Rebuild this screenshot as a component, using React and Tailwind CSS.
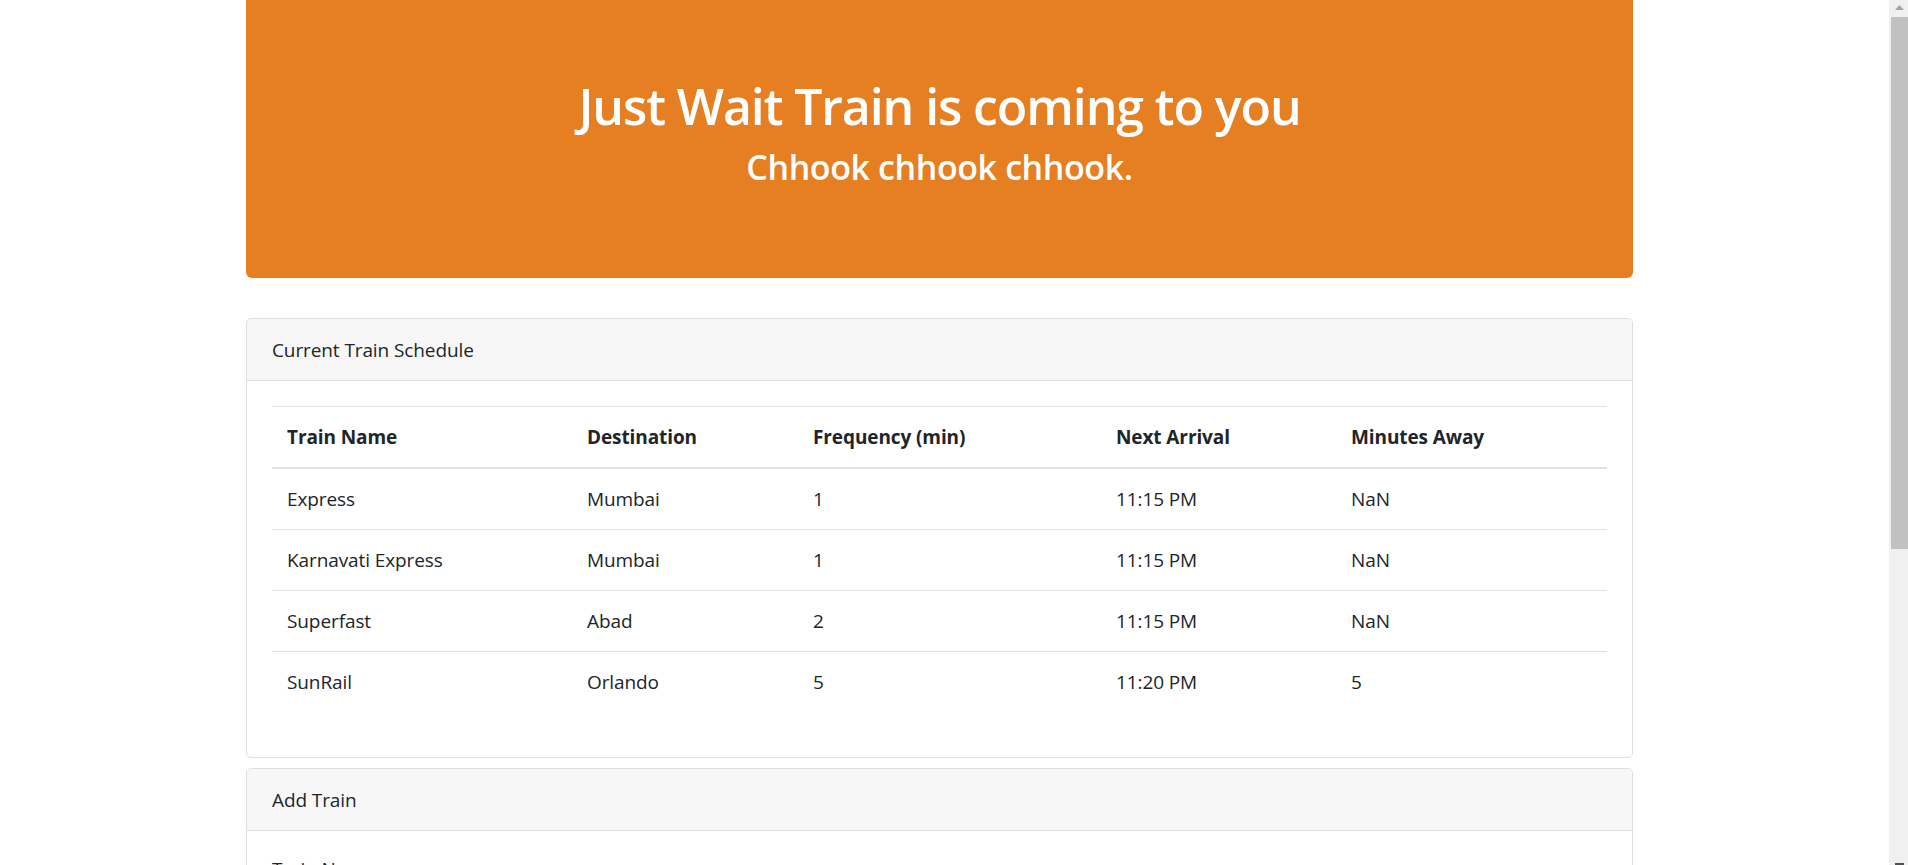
import React from "react";

const rows = [
  ["Express", "Mumbai", "1", "11:15 PM", "NaN"],
  ["Karnavati Express", "Mumbai", "1", "11:15 PM", "NaN"],
  ["Superfast", "Abad", "2", "11:15 PM", "NaN"],
  ["SunRail", "Orlando", "5", "11:20 PM", "5"],
];

const widths = ["w-[300px]", "w-[226px]", "w-[303px]", "w-[235px]", "w-auto"];

function Field({ label }) {
  return (
    <div className="mb-[20px]">
      <label className="mb-[10px] block text-[19px] leading-[30px]">{label}</label>
      <input className="block h-[48px] w-full rounded-[5px] border border-[#ced4da] px-[15px] text-[19px] text-[#495057] outline-none" />
    </div>
  );
}

function Scrollbar() {
  return (
    <div className="fixed right-0 top-0 flex h-screen w-[19px] flex-col items-end bg-[#f0f0f0]">
      <div className="flex h-[17px] w-[17px] items-start justify-center pt-[5px]">
        <svg width="9" height="5" viewBox="0 0 9 5">
          <path d="M4.5 0 L9 5 L0 5 Z" fill="#a3a3a3" />
        </svg>
      </div>
      <div className="h-[532px] w-[17px] bg-[#c1c1c1]" />
      <div className="flex-1" />
      <div className="flex h-[2px] w-[17px] justify-center">
        <div className="h-[2px] w-[9px] bg-[#505050]" />
      </div>
    </div>
  );
}

export default function App() {
  return (
    <div className="min-h-[2277px] bg-white font-['Open_Sans',sans-serif] tracking-[-0.1px] text-[#212529]">
      <div className="ml-[246px] w-[1387px]">
        <header className="flex h-[278px] flex-col items-center rounded-b-[6px] bg-[#e67e22] pt-[76px] text-white">
          <h1 className="text-[50px] font-semibold leading-[60px] tracking-[-1.1px]">Just Wait Train is coming to you</h1>
          <h3 className="mt-[11px] text-[34px] font-semibold leading-[40px] tracking-[-0.4px]">Chhook chhook chhook.</h3>
        </header>

        <section className="mt-[40px] rounded-[5px] border border-[#dfdfdf]">
          <div className="rounded-t-[5px] border-b border-[#dfdfdf] bg-[#f7f7f7] px-[25px] pb-[15px] pt-[16px] text-[19px] leading-[30px]">
            Current Train Schedule
          </div>
          <div className="p-[25px]">
            <table className="mb-[20px] w-full border-collapse text-left text-[19px] leading-[30px]">
              <thead>
                <tr>
                  {["Train Name", "Destination", "Frequency (min)", "Next Arrival", "Minutes Away"].map((h, i) => (
                    <th
                      key={h}
                      className={`${widths[i]} border-t border-b-2 border-t-[#dee2e6] border-b-[#dee2e6] px-[15px] py-[15px] font-bold`}
                    >
                      {h}
                    </th>
                  ))}
                </tr>
              </thead>
              <tbody>
                {rows.map((r) => (
                  <tr key={r[0]}>
                    {r.map((c, i) => (
                      <td key={i} className="border-t border-[#dee2e6] px-[15px] py-[15px]">
                        {c}
                      </td>
                    ))}
                  </tr>
                ))}
              </tbody>
            </table>
          </div>
        </section>

        <section className="mt-[10px] rounded-[5px] border border-[#dfdfdf]">
          <div className="rounded-t-[5px] border-b border-[#dfdfdf] bg-[#f7f7f7] px-[25px] pb-[15px] pt-[16px] text-[19px] leading-[30px]">
            Add Train
          </div>
          <form className="px-[25px] pb-[25px] pt-[23px]">
            <Field label="Train Name" />
            <Field label="Destination" />
            <Field label="First Train Time (HH:mm - military time)" />
            <Field label="Frequency (min)" />
            <button
              type="button"
              className="rounded-[5px] bg-[#007bff] px-[15px] py-[8px] text-[19px] leading-[30px] text-white"
            >
              Submit
            </button>
          </form>
        </section>
      </div>
      <Scrollbar />
    </div>
  );
}
